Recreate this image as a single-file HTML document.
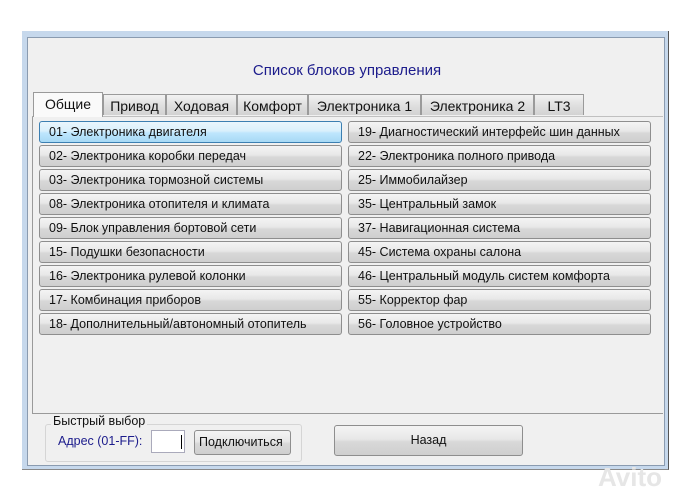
<!DOCTYPE html>
<html><head><meta charset="utf-8"><style>
body{margin:0;width:694px;height:498px;background:#fff;position:relative;overflow:hidden;font-family:"Liberation Sans","DejaVu Sans",sans-serif;}
.frame{position:absolute;left:22px;top:31px;width:646px;height:438px;background:#c6d8ec;border-right:1px solid #555;border-bottom:1px solid #888;}
.client{position:absolute;left:27px;top:37px;width:636px;height:427px;background:#f0f0f0;border:1px solid #8a9bb0;}
.title{position:absolute;left:0;width:694px;top:62px;text-align:center;font-size:15px;color:#1c1c8c;}
.page{position:absolute;left:32px;top:116px;width:630px;height:296px;border:1px solid #9a9a9a;border-right:none;border-top:1px solid #c0c0c0;background:#f0f0f0;}
.tab{position:absolute;top:94px;height:21px;border:1px solid #9a9a9a;border-bottom:none;background:linear-gradient(#f2f2f2,#e0e0e0 50%,#d2d2d2);font-size:14px;line-height:22px;text-align:center;color:#111;box-sizing:border-box;}
.tab.sel{top:92px;height:25px;background:#fafafa;z-index:2;line-height:22px;}
.btn{position:absolute;height:22px;width:303px;box-sizing:border-box;border:1px solid #8e8e8e;border-radius:3px;background:linear-gradient(#f4f4f4,#e8e8e8 45%,#d8d8d8 55%,#cfcfcf);font-size:12.5px;line-height:20px;padding-left:9px;color:#111;white-space:nowrap;}
.btn.hl{background:linear-gradient(#eaf6fd,#d9f0fc 45%,#bee6fd 55%,#a7d9f5);border-color:#3c7fb1;}
.gb{position:absolute;left:45px;top:424px;width:255px;height:36px;border:1px solid #d5d5d5;border-radius:3px;}
</style></head><body>
<div class="frame"></div>
<div class="client"></div>
<div class="title">Список блоков управления</div>
<div class="page"></div>
<div class="tab sel" style="left:33px;width:70px">Общие</div>
<div class="tab" style="left:103px;width:63px">Привод</div>
<div class="tab" style="left:166px;width:71px">Ходовая</div>
<div class="tab" style="left:237px;width:71px">Комфорт</div>
<div class="tab" style="left:308px;width:113px">Электроника 1</div>
<div class="tab" style="left:421px;width:113px">Электроника 2</div>
<div class="tab" style="left:534px;width:50px">LT3</div>

<div class="btn hl" style="left:39px;top:121px">01- Электроника двигателя</div>
<div class="btn" style="left:39px;top:145px">02- Электроника коробки передач</div>
<div class="btn" style="left:39px;top:169px">03- Электроника тормозной системы</div>
<div class="btn" style="left:39px;top:193px">08- Электроника отопителя и климата</div>
<div class="btn" style="left:39px;top:217px">09- Блок управления бортовой сети</div>
<div class="btn" style="left:39px;top:241px">15- Подушки безопасности</div>
<div class="btn" style="left:39px;top:265px">16- Электроника рулевой колонки</div>
<div class="btn" style="left:39px;top:289px">17- Комбинация приборов</div>
<div class="btn" style="left:39px;top:313px">18- Дополнительный/автономный отопитель</div>

<div class="btn" style="left:348px;top:121px">19- Диагностический интерфейс шин данных</div>
<div class="btn" style="left:348px;top:145px">22- Электроника полного привода</div>
<div class="btn" style="left:348px;top:169px">25- Иммобилайзер</div>
<div class="btn" style="left:348px;top:193px">35- Центральный замок</div>
<div class="btn" style="left:348px;top:217px">37- Навигационная система</div>
<div class="btn" style="left:348px;top:241px">45- Система охраны салона</div>
<div class="btn" style="left:348px;top:265px">46- Центральный модуль систем комфорта</div>
<div class="btn" style="left:348px;top:289px">55- Корректор фар</div>
<div class="btn" style="left:348px;top:313px">56- Головное устройство</div>

<div class="gb"></div>
<div style="position:absolute;left:51px;top:414px;background:#f0f0f0;padding:0 2px;font-size:12.5px;color:#111">Быстрый выбор</div>
<div style="position:absolute;left:58px;top:434px;font-size:12.5px;color:#1c1c8c">Адрес (01-FF):</div>
<div style="position:absolute;left:151px;top:430px;width:34px;height:23px;box-sizing:border-box;background:#fff;border:1px solid #aab;"><div style="position:absolute;left:29px;top:4px;width:1px;height:14px;background:#000"></div></div>
<div class="btn" style="left:194px;top:430px;width:97px;height:25px;padding-left:4px;line-height:23px;font-size:12.5px">Подключиться</div>
<div class="btn" style="left:334px;top:425px;width:189px;height:31px;padding:0;text-align:center;line-height:29px;font-size:12.5px">Назад</div>
<div style="position:absolute;left:598px;top:462px;font-size:26px;font-weight:bold;color:#e6e6e6;letter-spacing:0px">Avito</div>
</body></html>
